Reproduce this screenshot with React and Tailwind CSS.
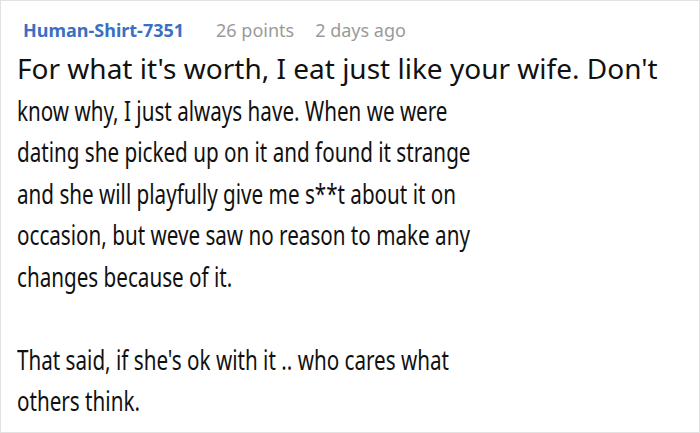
export default function App() {
  const condensed = [
    'know why, I just always have. When we were',
    'dating she picked up on it and found it strange',
    'and she will playfully give me s**t about it on',
    'occasion, but weve saw no reason to make any',
    'changes because of it.',
  ];
  const tail = ['That said, if she\'s ok with it .. who cares what', 'others think.'];

  return (
    <div className="w-[700px] h-[433px] bg-white border border-[#e2e2e2] overflow-hidden" style={{ fontFamily: '"Noto Sans", "Open Sans", sans-serif' }}>
      <div className="pt-[16px] pl-[22px] flex items-baseline text-[18px] leading-normal">
        <span className="font-bold text-[#3b6fc1]">Human-Shirt-7351</span>
        <span className="ml-[32px] text-[#9a9a9a]">26 points</span>
        <span className="ml-[21px] text-[#9a9a9a]">2 days ago</span>
      </div>
      <div className="mt-[4px] pl-[16px] text-[28px] leading-[41.5px] text-[#111] whitespace-nowrap">
        <div>For what it's worth, I eat just like your wife. Don't</div>
        {condensed.map((line, i) => (
          <div key={i}>
            <span className="inline-block origin-left scale-x-[0.737]">{line}</span>
          </div>
        ))}
        <div className="h-[41.5px]" />
        {tail.map((line, i) => (
          <div key={i}>
            <span className="inline-block origin-left scale-x-[0.737]">{line}</span>
          </div>
        ))}
      </div>
    </div>
  );
}
